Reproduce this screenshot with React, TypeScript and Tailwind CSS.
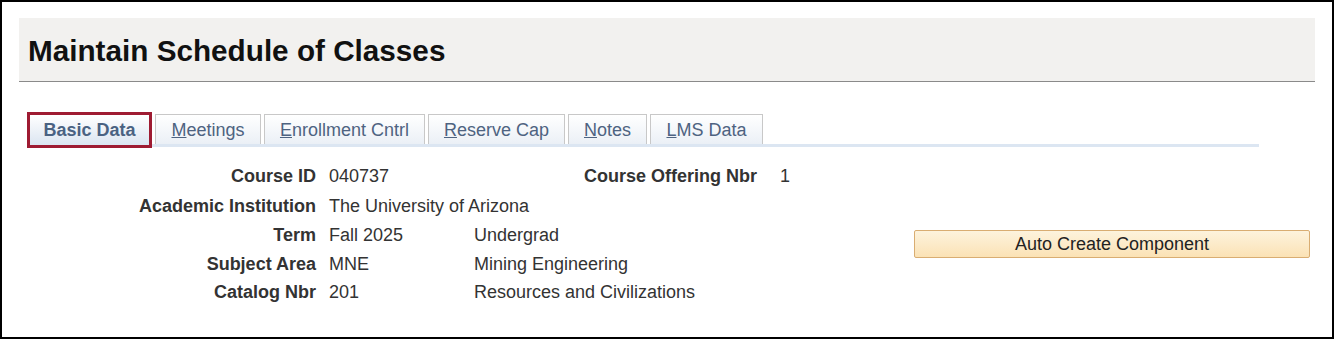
import React from 'react';

const tabs = [
  { key: 'M', rest: 'eetings', width: 'w-[106px]' },
  { key: 'E', rest: 'nrollment Cntrl', width: 'w-[161px]' },
  { key: 'R', rest: 'eserve Cap', width: 'w-[137px]' },
  { key: 'N', rest: 'otes', width: 'w-[79px]' },
  { key: 'L', rest: 'MS Data', width: 'w-[113px]' },
];

function Label({ children }: { children: React.ReactNode }) {
  return <div className="w-[314px] text-right font-bold text-[#333333]">{children}</div>;
}

export default function App() {
  return (
    <div
      className="w-[1334px] h-[339px] border-2 border-black bg-white overflow-hidden"
      style={{ fontFamily: '"Liberation Sans", Arial, sans-serif' }}
    >
      {/* page header */}
      <div className="mx-[17px] mt-[16px] h-[64px] bg-[#f2f1ef] border-b border-[#8a8a8a] flex items-center pl-[9px] pt-[2px]">
        <h1 className="text-[29.7px] font-bold text-[#111111] leading-none">Maintain Schedule of Classes</h1>
      </div>

      {/* tabs */}
      <div className="ml-[25px] mt-[30px] w-[1232px] flex items-end gap-[3px] border-b-[3px] border-[#dce6f2]">
        <div className="relative -mb-[4px] w-[125px] h-[36px] border-[3px] border-[#9e1b32] bg-gradient-to-b from-white to-[#dbe5f1] flex items-center justify-center pt-[1px] text-[18px] font-bold text-[#4a6282]">
          Basic Data
        </div>
        {tabs.map((t) => (
          <div
            key={t.key}
            className={`${t.width} h-[30px] border border-b-0 border-[#c8c8c8] bg-gradient-to-b from-white to-[#ebf0f6] flex items-center justify-center pt-[1px] text-[18px] text-[#4e6381]`}
          >
            <span>
              <span className="underline underline-offset-[1px]">{t.key}</span>
              {t.rest}
            </span>
          </div>
        ))}
      </div>

      {/* form */}
      <div className="mt-[14px] flex text-[18px] text-[#333333]">
        <div className="w-[912px] grid grid-rows-[30px_30px_29px_28px_28px]">
          <div className="flex items-center">
            <Label>Course ID</Label>
            <div className="ml-[13px] w-[145px]">040737</div>
            <div className="w-[283px] text-right font-bold">Course Offering Nbr</div>
            <div className="ml-[23px]">1</div>
          </div>
          <div className="flex items-center">
            <Label>Academic Institution</Label>
            <div className="ml-[13px]">The University of Arizona</div>
          </div>
          <div className="flex items-center">
            <Label>Term</Label>
            <div className="ml-[13px] w-[145px]">Fall 2025</div>
            <div>Undergrad</div>
          </div>
          <div className="flex items-center">
            <Label>Subject Area</Label>
            <div className="ml-[13px] w-[145px]">MNE</div>
            <div>Mining Engineering</div>
          </div>
          <div className="flex items-center">
            <Label>Catalog Nbr</Label>
            <div className="ml-[13px] w-[145px]">201</div>
            <div>Resources and Civilizations</div>
          </div>
        </div>
        <div className="pt-[69px]">
          <button className="w-[396px] h-[28px] rounded-[2px] border border-[#d9ad72] bg-gradient-to-b from-[#fdf3dd] to-[#fbe2b5] text-[18px] text-[#222222] leading-none">
            Auto Create Component
          </button>
        </div>
      </div>
    </div>
  );
}
